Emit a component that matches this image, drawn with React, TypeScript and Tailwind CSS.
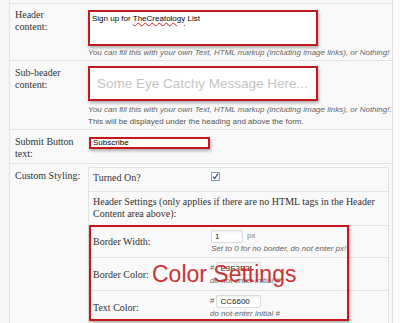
import React from "react";

const serif = { fontFamily: '"Liberation Serif", "Times New Roman", serif' };
const sans = { fontFamily: '"Liberation Sans", Arial, sans-serif' };

function Hint({ children, className = "" }: { children: React.ReactNode; className?: string }) {
  return (
    <div className={"text-[8px] italic text-[#666] leading-[12px] " + className} style={sans}>
      {children}
    </div>
  );
}

function SmallInput({ value, w }: { value: string; w: string }) {
  return (
    <div
      className={
        "h-[13px] bg-white border border-[#dcdcdc] rounded-[2px] shadow-[inset_0_1px_2px_rgba(0,0,0,0.08)] text-[8px] leading-[11px] pl-[3px] text-[#222] " +
        w
      }
      style={sans}
    >
      {value}
    </div>
  );
}

export default function App() {
  return (
    <div className="w-[400px] h-[323px] overflow-hidden relative bg-[#fcfcfc] flex" style={serif}>
      <div className="w-[10px] h-full bg-[#f6f6f6] border-r border-[#e4e4e4]" />
      <div className="w-[383px] h-full bg-[#f9f9f9] border-r border-[#dedede] pt-[3px]">
        {/* Row 1 */}
        <div className="grid grid-cols-[78px_1fr] h-[57px] border-t border-[#e2e2e2]">
          <div className="pl-[5px] pt-[5px] text-[10px] leading-[12px] text-[#333]">
            Header
            <br />
            content:
          </div>
          <div>
            <div
              className="mt-[6px] w-[230px] h-[36px] bg-white border-2 border-[#c8161d] shadow-[1px_2px_3px_rgba(0,0,0,0.3)] pl-[2px] pt-[1px] text-[8px] leading-[11px] text-black"
              style={sans}
            >
              Sign up for{" "}
              <span className="underline decoration-wavy decoration-[#e02020] decoration-[0.5px] underline-offset-[1px]">
                TheCreatology
              </span>{" "}
              List
            </div>
            <Hint className="mt-[1px]">
              You can fill this with your own Text, HTML markup (including image links), or Nothing!
            </Hint>
          </div>
        </div>
        {/* Row 2 */}
        <div className="grid grid-cols-[78px_1fr] h-[69px] border-t border-[#e2e2e2]">
          <div className="pl-[5px] pt-[6px] text-[10px] leading-[12px] text-[#333]">
            Sub-header
            <br />
            content:
          </div>
          <div>
            <div
              className="mt-[5px] w-[230px] h-[35px] bg-white border-2 border-[#c8161d] shadow-[1px_2px_3px_rgba(0,0,0,0.3)] pl-[7px] pt-[8px] text-[13.5px] leading-[16px] text-[#c4c4c4]"
              style={sans}
            >
              Some Eye Catchy Message Here...
            </div>
            <Hint className="mt-[3px]">
              You can fill this with your own Text, HTML markup (including image links), or Nothing!.
            </Hint>
            <div className="text-[8px] text-[#555] leading-[12px]" style={sans}>
              This will be displayed under the heading and above the form.
            </div>
          </div>
        </div>
        {/* Row 3 */}
        <div className="grid grid-cols-[78px_1fr] h-[34px] border-t border-[#e2e2e2]">
          <div className="pl-[5px] pt-[6px] text-[10px] leading-[12px] text-[#333]">
            Submit Button
            <br />
            text:
          </div>
          <div>
            <div
              className="mt-[7px] ml-[1px] w-[121px] h-[12px] bg-white border-2 border-[#c8161d] shadow-[1px_2px_3px_rgba(0,0,0,0.3)] pl-[2px] text-[8px] leading-[8px] text-black"
              style={sans}
            >
              Subscribe
            </div>
          </div>
        </div>
        {/* Row 4 */}
        <div className="grid grid-cols-[78px_1fr] border-t border-[#e2e2e2]">
          <div className="pl-[5px] pt-[6px] text-[10px] leading-[12px] text-[#333]">Custom Styling:</div>
          <div className="pr-[3px]">
            <div className="mt-[3px] border border-[#e3e3e3] bg-[#f9f9f9] rounded-[2px]">
              <div className="grid grid-cols-[122px_1fr] h-[24px] border-b border-[#e3e3e3]">
                <div className="pl-[4px] pt-[4px] text-[10px] leading-[12px] text-[#333]">Turned On?</div>
                <div className="pt-[4px]">
                  <svg width="9" height="9" viewBox="0 0 9 9">
                    <rect x="0.5" y="0.5" width="8" height="8" fill="#fff" stroke="#8e9bb5" />
                    <path d="M2 4.6 L3.7 6.6 L7 1.6" fill="none" stroke="#2c4fa0" strokeWidth="1.2" />
                  </svg>
                </div>
              </div>
              <div className="h-[34px] border-b border-[#e3e3e3] pl-[4px] pt-[4px] text-[10px] leading-[12px] text-[#333]">
                Header Settings (only applies if there are no HTML tags in the Header
                <br />
                Content area above):
              </div>
              <div className="grid grid-cols-[122px_1fr] h-[32px] border-b border-[#e3e3e3]">
                <div className="pl-[4px] flex items-center text-[10px] text-[#333]">Border Width:</div>
                <div className="pt-[4px]">
                  <div className="flex items-start">
                    <SmallInput value="1" w="w-[32px] h-[12px]" />
                    <span className="ml-[4px] text-[8px] leading-[11px] text-[#888]" style={sans}>
                      px
                    </span>
                  </div>
                  <Hint className="leading-[11px] mt-[0px]">Set to 0 for no border, do not enter px!</Hint>
                </div>
              </div>
              <div className="grid grid-cols-[122px_1fr] h-[33px] border-b border-[#e3e3e3]">
                <div className="pl-[4px] flex items-center text-[10px] text-[#333]">Border Color:</div>
                <div className="pt-[4px] -ml-[1px]">
                  <div className="flex items-start">
                    <span className="mr-[2px] text-[8px] leading-[12px] text-[#666]" style={sans}>
                      #
                    </span>
                    <SmallInput value="E3E3E3" w="w-[45px]" />
                  </div>
                  <Hint className="leading-[10px]">do not enter initial #</Hint>
                </div>
              </div>
              <div className="grid grid-cols-[122px_1fr] h-[33px]">
                <div className="pl-[4px] flex items-center text-[10px] text-[#333]">Text Color:</div>
                <div className="pt-[4px] -ml-[1px]">
                  <div className="flex items-start">
                    <span className="mr-[2px] text-[8px] leading-[12px] text-[#666]" style={sans}>
                      #
                    </span>
                    <SmallInput value="CC6600" w="w-[45px]" />
                  </div>
                  <Hint className="leading-[10px]">do not enter initial #</Hint>
                </div>
              </div>
            </div>
          </div>
        </div>
      </div>

      {/* annotation overlay */}
      <div className="absolute left-[89px] top-[225px] w-[260px] h-[96px] border-2 border-[#c8161d] shadow-[1px_2px_3px_rgba(0,0,0,0.3)] pointer-events-none" />
      <div
        className="absolute left-[152px] top-[263px] text-[23px] leading-[23px] text-[#cc3333] whitespace-nowrap"
        style={sans}
      >
        Color Settings
      </div>
    </div>
  );
}
